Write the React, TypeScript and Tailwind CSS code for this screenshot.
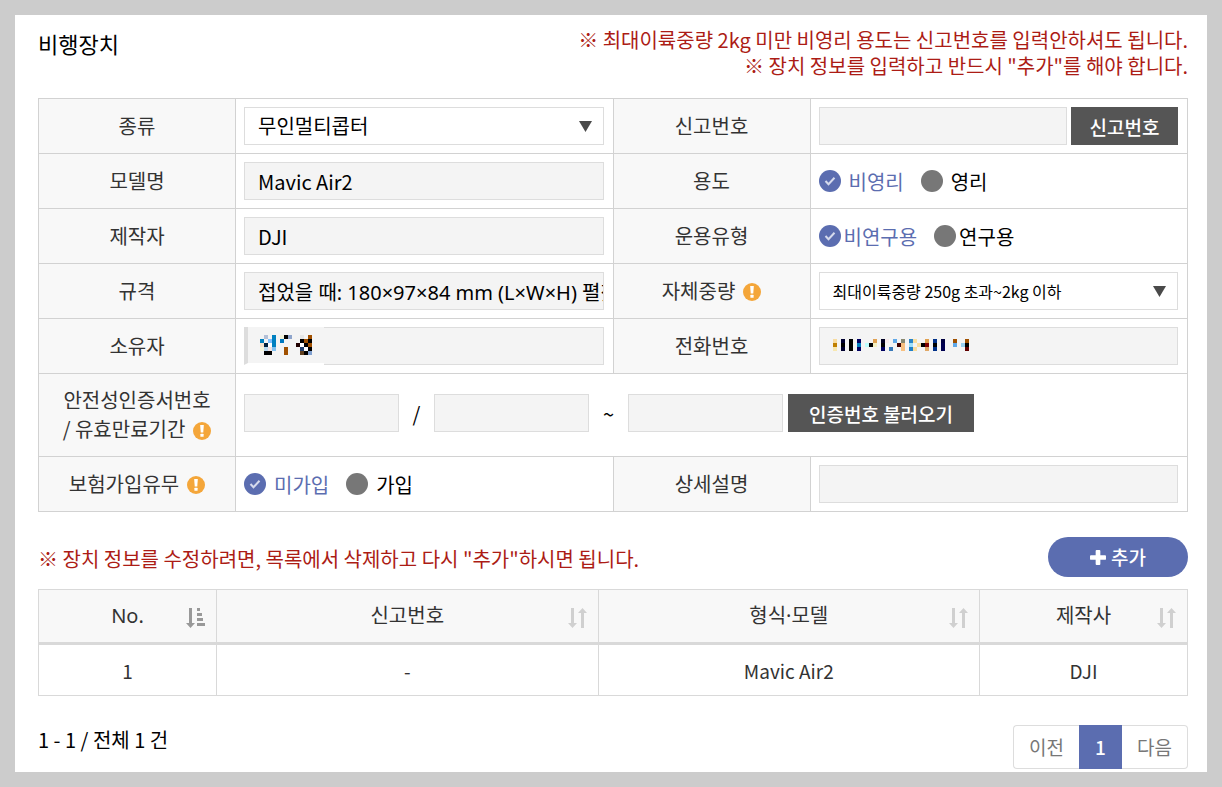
import React, { useState } from 'react';

// Masked values are stored as coarse pixel grids: [column, row, color]
type Cell = [number, number, string];

const OWNER_MASK: Cell[] = [
  [1, 0, '#b3c0d8'], [3, 0, '#0080c0'], [5, 0, '#f3f3dc'], [6, 0, '#000000'], [7, 0, '#8fa5cc'], [10, 0, '#e6e6e6'], [12, 0, '#a05000'],
  [0, 1, '#0080c0'], [2, 1, '#80c0ff'], [3, 1, '#0080c0'], [5, 1, '#0078c0'], [10, 1, '#000000'], [11, 1, '#a05000'], [12, 1, '#000000'],
  [0, 2, '#f5e3d0'], [1, 2, '#002040'], [2, 2, '#ffffff'], [3, 2, '#0080c0'], [9, 2, '#200000'], [10, 2, '#ffffff'], [11, 2, '#000000'], [12, 2, '#a05000'],
  [0, 3, '#f5f5dc'], [1, 3, '#b8d8f0'], [2, 3, '#f0e0e0'], [3, 3, '#80c0f0'], [6, 3, '#a05000'], [10, 3, '#204070'], [11, 3, '#ffffff'], [12, 3, '#000000'],
  [1, 4, '#000000'], [2, 4, '#000000'], [6, 4, '#a05000'], [10, 4, '#604020'], [11, 4, '#000000'], [12, 4, '#80a0d0'],
];

const PHONE_MASK: Cell[] = [
  [0, 0, '#f8dca0'], [2, 0, '#000030'], [4, 0, '#000000'], [6, 0, '#000060'], [10, 0, '#e0a050'], [12, 0, '#000020'], [13, 0, '#f5eaea'],
  [15, 0, '#60a8e8'], [17, 0, '#888870'], [19, 0, '#2a84c8'], [20, 0, '#f8dfa0'], [23, 0, '#e0a050'], [25, 0, '#003088'], [27, 0, '#000040'],
  [30, 0, '#a05000'], [33, 0, '#a05000'],
  [0, 1, '#c08000'], [2, 1, '#000000'], [4, 1, '#000000'], [6, 1, '#0080c0'], [8, 1, '#c0ffff'], [9, 1, '#000000'], [10, 1, '#f5f0c0'],
  [12, 1, '#000000'], [16, 1, '#400000'], [17, 1, '#f8c080'], [19, 1, '#a0e0f8'], [21, 1, '#f8dca0'], [22, 1, '#000000'], [23, 1, '#800000'],
  [25, 1, '#000000'], [27, 1, '#000050'], [30, 1, '#60a8e8'], [32, 1, '#98cff0'], [33, 1, '#000000'],
  [0, 2, '#f8e8b0'], [2, 2, '#000030'], [4, 2, '#000000'], [6, 2, '#000060'], [12, 2, '#000060'], [14, 2, '#3878b8'], [17, 2, '#f8c080'],
  [19, 2, '#2080c8'], [20, 2, '#f8dca0'], [23, 2, '#e0a868'], [25, 2, '#003088'], [27, 2, '#000050'], [33, 2, '#600000'],
];

const labelCell = 'w-[197px] border border-[#d2d2d2] bg-[#f8f8f8] px-2 pb-0.5 text-center font-normal text-[#333]';
const valueCell = 'border border-[#d2d2d2] py-2 pl-2 pr-[9px]';
const field = 'block h-[38px] w-full border border-[#ddd] bg-[#f4f4f4] px-[13px] text-xl text-black outline-none';
const darkButton = 'h-[38px] shrink-0 bg-[#555] text-[19px] font-medium text-white';

function Mosaic({ cells, cols, rows }: { cells: Cell[]; cols: number; rows: number }) {
  return (
    <svg width={cols * 4} height={rows * 4} shapeRendering="crispEdges" aria-hidden="true">
      {cells.map(([x, y, fill]) => (
        <rect key={`${x}-${y}`} x={x * 4} y={y * 4} width="4" height="4" fill={fill} />
      ))}
    </svg>
  );
}

function InfoIcon() {
  return (
    <svg className="ml-2 mt-1 inline-block size-[18px]" viewBox="0 0 18 18" aria-hidden="true">
      <circle cx="9" cy="9" r="9" fill="#f4a63a" />
      <path d="M7.2 3h3.6l-.5 7.4H7.7z" fill="#fff" />
      <rect x="7.4" y="11.8" width="3.2" height="3" rx=".4" fill="#fff" />
    </svg>
  );
}

function SelectBox({ id, value, textClass }: { id: string; value: string; textClass: string }) {
  return (
    <div className="relative">
      <select id={id} className={`block h-[38px] w-full appearance-none border border-[#ddd] bg-white px-[13px] text-black outline-none ${textClass}`}>
        <option>{value}</option>
      </select>
      <svg className="pointer-events-none absolute right-3 top-[14px]" width="13" height="11" viewBox="0 0 13 11" aria-hidden="true">
        <path d="M0 0h13L6.500 11z" fill="#4a4a4a" />
      </svg>
    </div>
  );
}

interface RadioPairProps {
  name: string;
  options: string[];
  gapClass: string;
}

function RadioPair({ name, options, gapClass }: RadioPairProps) {
  const [selected, setSelected] = useState(options[0]);

  return (
    <div className="flex h-[38px] items-center gap-[17px]">
      {options.map((option) => (
        <label key={option} className={`flex items-center ${gapClass} ${selected === option ? 'text-[#5b6db0]' : 'text-black'}`}>
          <span className="relative block size-[22px]">
            <input
              type="radio"
              name={name}
              checked={selected === option}
              onChange={() => setSelected(option)}
              className="block size-[22px] appearance-none rounded-full bg-[#777] checked:bg-[#5b6db0]"
            />
            {selected === option && (
              <svg className="pointer-events-none absolute inset-0" width="22" height="22" viewBox="0 0 22 22" fill="none" aria-hidden="true">
                <path d="M6.5 11l3 3.2 6-6.4" stroke="#d5daec" strokeWidth="2" />
              </svg>
            )}
          </span>
          {option}
        </label>
      ))}
    </div>
  );
}

function SortIcon({ active }: { active?: boolean }) {
  return active ? (
    <svg className="mt-1" width="20" height="22" viewBox="0 0 20 22" fill="#999" aria-hidden="true">
      <path d="M3 1h3v15h3l-4.500 5L0 16h3z" />
      <path d="M11 1h3v3h-3zM11 6h5v3h-5zM11 11h6v3h-6zM11 16h8v3h-8z" />
    </svg>
  ) : (
    <svg className="mt-1" width="20" height="22" viewBox="0 0 20 22" fill="#d0d0d0" aria-hidden="true">
      <path d="M3 1h3v15h3l-4.500 5L0 16h3z" />
      <path d="M13 21h3V6h3l-4.500-5L10 6h3z" />
    </svg>
  );
}

function DeviceForm() {
  return (
    <table className="mt-[19px] w-full table-fixed border-collapse text-xl leading-[29px]">
      <tbody>
        <tr>
          <th scope="row" className={labelCell}><label htmlFor="kind">종류</label></th>
          <td className={valueCell}><SelectBox id="kind" value="무인멀티콥터" textClass="text-xl" /></td>
          <th scope="row" className={labelCell}><label htmlFor="report">신고번호</label></th>
          <td className={valueCell}>
            <div className="flex gap-1">
              <input id="report" className={field} readOnly />
              <button type="button" className={`${darkButton} w-[107px]`}>신고번호</button>
            </div>
          </td>
        </tr>
        <tr>
          <th scope="row" className={labelCell}><label htmlFor="model">모델명</label></th>
          <td className={valueCell}><input id="model" className={field} defaultValue="Mavic Air2" /></td>
          <th scope="row" className={labelCell}>용도</th>
          <td className={valueCell}><RadioPair name="purpose" options={['비영리', '영리']} gapClass="gap-2" /></td>
        </tr>
        <tr>
          <th scope="row" className={labelCell}><label htmlFor="maker">제작자</label></th>
          <td className={valueCell}><input id="maker" className={field} defaultValue="DJI" /></td>
          <th scope="row" className={labelCell}>운용유형</th>
          <td className={valueCell}><RadioPair name="operation" options={['비연구용', '연구용']} gapClass="gap-[3px]" /></td>
        </tr>
        <tr>
          <th scope="row" className={labelCell}><label htmlFor="spec">규격</label></th>
          <td className={valueCell}>
            <input
              id="spec"
              className={`${field} pr-0 font-['Noto_Sans','Noto_Sans_CJK_KR',sans-serif]`}
              defaultValue="접었을 때: 180×97×84 mm (L×W×H) 펼쳤을 때"
            />
          </td>
          <th scope="row" className={labelCell}>
            <label htmlFor="weight" className="flex items-center justify-center">자체중량<InfoIcon /></label>
          </th>
          <td className={valueCell}>
            <SelectBox id="weight" value="최대이륙중량 250g 초과~2kg 이하" textClass="text-base" />
          </td>
        </tr>
        <tr>
          <th scope="row" className={labelCell}><label htmlFor="owner">소유자</label></th>
          <td className={valueCell}>
            <div className="relative">
              <input id="owner" className={field} />
              <div className="pointer-events-none absolute left-0 top-0 h-[38px] w-20 border-b-2 border-l-4 border-b-white border-l-[#ddd] bg-[#f4f4f4] pl-3 pt-2">
                <Mosaic cells={OWNER_MASK} cols={13} rows={5} />
              </div>
            </div>
          </td>
          <th scope="row" className={labelCell}><label htmlFor="phone">전화번호</label></th>
          <td className={valueCell}>
            <div className="relative">
              <input id="phone" className={field} />
              <div className="pointer-events-none absolute left-[14px] top-3">
                <Mosaic cells={PHONE_MASK} cols={34} rows={3} />
              </div>
            </div>
          </td>
        </tr>
        <tr>
          <th scope="row" className={`${labelCell} h-[83px]`}>
            <div>안전성인증서번호</div>
            <div className="flex items-center justify-center">/ 유효만료기간<InfoIcon /></div>
          </th>
          <td colSpan={3} className={valueCell}>
            <div className="flex items-center pb-1">
              <input aria-label="안전성인증서번호" className={`${field} max-w-[155px]`} readOnly />
              <span className="w-[35px] shrink-0 text-center">/</span>
              <input aria-label="유효기간 시작" className={`${field} max-w-[155px]`} readOnly />
              <span className="w-[39px] shrink-0 text-center">~</span>
              <input aria-label="유효기간 만료" className={`${field} max-w-[155px]`} readOnly />
              <button type="button" className={`${darkButton} ml-[5px] w-[186px]`}>인증번호 불러오기</button>
            </div>
          </td>
        </tr>
        <tr>
          <th scope="row" className={labelCell}>
            <div className="flex items-center justify-center">보험가입유무<InfoIcon /></div>
          </th>
          <td className={valueCell}><RadioPair name="insurance" options={['미가입', '가입']} gapClass="gap-2" /></td>
          <th scope="row" className={labelCell}><label htmlFor="detail">상세설명</label></th>
          <td className={valueCell}><input id="detail" className={field} /></td>
        </tr>
      </tbody>
    </table>
  );
}

const columns = [
  { label: 'No.', width: 'w-[178px]', active: true },
  { label: '신고번호', width: '' },
  { label: '형식·모델', width: '' },
  { label: '제작사', width: 'w-[208px]' },
];

const devices = [['1', '-', 'Mavic Air2', 'DJI']];

function DeviceList() {
  return (
    <table className="mt-3 w-full table-fixed border-collapse leading-[29px] text-[#333]">
      <thead>
        <tr className="h-[54px] border-b-[3px] border-[#d9d9d9] bg-[#f8f8f8] text-xl">
          {columns.map((c) => (
            <th key={c.label} scope="col" className={`border-x border-t border-[#d9d9d9] px-[10px] font-normal ${c.width}`}>
              <button type="button" className="grid w-full grid-cols-[20px_1fr_20px] items-center font-['Noto_Sans','Noto_Sans_CJK_KR',sans-serif]">
                <span className="col-start-2">{c.label}</span>
                <SortIcon active={c.active} />
              </button>
            </th>
          ))}
        </tr>
      </thead>
      <tbody>
        {devices.map((row) => (
          <tr key={row[0]} className="h-[52px] text-[19px]">
            {row.map((cell) => (
              <td key={cell} className="border border-[#d9d9d9] text-center">{cell}</td>
            ))}
          </tr>
        ))}
      </tbody>
    </table>
  );
}

export default function App() {
  return (
    <div className="min-h-screen bg-[#ccc] p-[15px] font-['Noto_Sans_CJK_KR',sans-serif] text-xl text-black">
      <main className="bg-white pb-[3px] pl-[23px] pr-[19px] pt-3">
        <header className="flex justify-between">
          <h1 className="pt-[3px] text-[22px] leading-[26px]">비행장치</h1>
          <div className="text-right leading-[26px] text-[#ac1c15]">
            <p>※ 최대이륙중량 2kg 미만 비영리 용도는 신고번호를 입력안하셔도 됩니다.</p>
            <p>※ 장치 정보를 입력하고 반드시 "추가"를 해야 합니다.</p>
          </div>
        </header>

        <DeviceForm />

        <div className="mt-[25px] flex items-center justify-between">
          <p className="pt-1 text-[#ac1c15]">※ 장치 정보를 수정하려면, 목록에서 삭제하고 다시 "추가"하시면 됩니다.</p>
          <button type="button" className="flex h-10 w-[140px] items-center justify-center gap-[5px] rounded-full bg-[#5b6db0] text-[19px] font-medium text-white">
            <svg width="16" height="15" viewBox="0 0 17 16" aria-hidden="true">
              <path d="M6 1a1 1 0 0 1 1-1h3a1 1 0 0 1 1 1v4.500h5a1 1 0 0 1 1 1v3a1 1 0 0 1-1 1h-5V15a1 1 0 0 1-1 1H7a1 1 0 0 1-1-1v-4.500H1a1 1 0 0 1-1-1v-3a1 1 0 0 1 1-1h5z" fill="#fff" />
            </svg>
            추가
          </button>
        </div>

        <DeviceList />

        <footer className="mt-[29px] flex items-start justify-between">
          <p className="leading-[29px]">1 - 1 / 전체 1 건</p>
          <nav className="flex h-11 text-[19px] text-[#777]" aria-label="페이지">
            <a href="#prev" className="flex w-[66px] items-center justify-center rounded-l border border-r-0 border-[#ddd]">이전</a>
            <a href="#page-1" aria-current="page" className="flex w-[43px] items-center justify-center bg-[#5b6db0] font-medium text-white">1</a>
            <a href="#next" className="flex w-[66px] items-center justify-center rounded-r border border-l-0 border-[#ddd]">다음</a>
          </nav>
        </footer>
      </main>
    </div>
  );
}
